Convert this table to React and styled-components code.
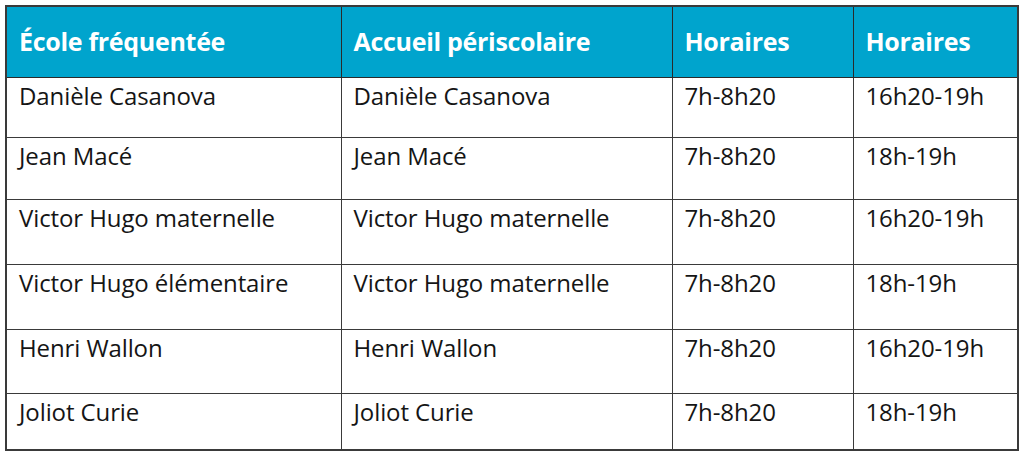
import React from "react";
import styled, { createGlobalStyle } from "styled-components";

const Global = createGlobalStyle`
  html, body { margin: 0; padding: 0; background: #ffffff; }
  body { font-family: "Open Sans", "Noto Sans", sans-serif; }
`;

const Page = styled.div`
  width: 1024px;
  height: 452px;
  box-sizing: border-box;
  padding: 5px 0 0 5px;
  background: #fff;
`;

const Table = styled.table`
  width: 1012px;
  table-layout: fixed;
  border-collapse: collapse;
  border: 2px solid #3a3a3a;
`;

const HeadCell = styled.th`
  background: #00a4cd;
  color: #ffffff;
  font-weight: 700;
  font-size: 25px;
  text-align: left;
  height: 68px;
  padding: 0 0 2px 12px;
  border: 1.5px solid #2a2a2a;
  vertical-align: middle;
  letter-spacing: -0.3px;
  white-space: nowrap;
`;

const Row = styled.tr`
  height: ${(p) => p.$h}px;
`;

const Cell = styled.td`
  font-size: 24px;
  color: #151515;
  padding: 3px 0 0 12px;
  vertical-align: top;
  border: 1.5px solid #3a3a3a;
  letter-spacing: -0.1px;
  line-height: 30px;
  white-space: nowrap;
`;

const cols = [335, 331, 181, 165];
const heads = ["École fréquentée", "Accueil périscolaire", "Horaires", "Horaires"];
const rows = [
  { h: 60, c: ["Danièle Casanova", "Danièle Casanova", "7h-8h20", "16h20-19h"] },
  { h: 62, c: ["Jean Macé", "Jean Macé", "7h-8h20", "18h-19h"] },
  { h: 65, c: ["Victor Hugo maternelle", "Victor Hugo maternelle", "7h-8h20", "16h20-19h"] },
  { h: 65, c: ["Victor Hugo élémentaire", "Victor Hugo maternelle", "7h-8h20", "18h-19h"] },
  { h: 64, c: ["Henri Wallon", "Henri Wallon", "7h-8h20", "16h20-19h"] },
  { h: 56, c: ["Joliot Curie", "Joliot Curie", "7h-8h20", "18h-19h"] },
];

export default function App() {
  return (
    <Page>
      <Global />
      <Table>
        <colgroup>
          {cols.map((w, i) => (
            <col key={i} style={{ width: w }} />
          ))}
        </colgroup>
        <thead>
          <tr>
            {heads.map((h, i) => (
              <HeadCell key={i}>{h}</HeadCell>
            ))}
          </tr>
        </thead>
        <tbody>
          {rows.map((r, i) => (
            <Row key={i} $h={r.h}>
              {r.c.map((t, j) => (
                <Cell key={j}>{t}</Cell>
              ))}
            </Row>
          ))}
        </tbody>
      </Table>
    </Page>
  );
}
